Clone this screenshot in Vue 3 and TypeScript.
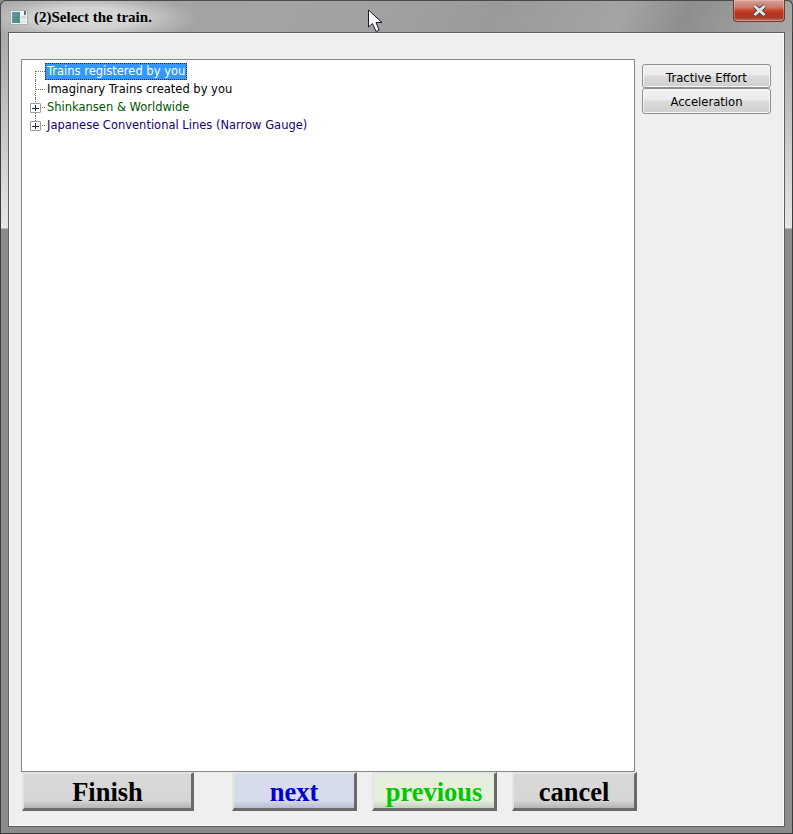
<script setup lang="ts">
interface Node { label: string; color: string; expandable: boolean; selected?: boolean }
const nodes: Node[] = [
  { label: 'Trains registered by you', color: '#fff', expandable: false, selected: true },
  { label: 'Imaginary Trains created by you', color: '#000', expandable: false },
  { label: 'Shinkansen & Worldwide', color: '#005500', expandable: true },
  { label: 'Japanese Conventional Lines (Narrow Gauge)', color: '#1c006e', expandable: true },
]
const actions = [
  { label: 'Finish', cls: 'finish' },
  { label: 'next', cls: 'next' },
  { label: 'previous', cls: 'previous' },
  { label: 'cancel', cls: 'cancel' },
]
</script>

<template>
  <div class="window">
    <div class="titlebar">
      <svg class="app-icon" width="18" height="15" viewBox="0 0 18 15">
        <defs>
          <linearGradient id="pane" x1="0" y1="0" x2="1" y2="1">
            <stop offset="0" stop-color="#6f93a8" />
            <stop offset="1" stop-color="#3f8f78" />
          </linearGradient>
        </defs>
        <rect x="0.5" y="0.5" width="17" height="14" fill="#f2f5f4" stroke="#a7b0b0" />
        <rect x="2" y="2" width="8" height="11" fill="url(#pane)" />
        <rect x="11" y="6" width="5" height="3" fill="#d3d9d9" />
        <rect x="11" y="10" width="5" height="3" fill="#e2e6e6" />
        <rect x="14" y="1" width="2" height="4" fill="#4d7078" />
      </svg>
      <span class="title">(2)Select the train.</span>
      <div class="close">
        <svg width="15" height="13" viewBox="0 0 15 13">
          <path d="M2.5 2 L12.5 11 M12.5 2 L2.5 11" stroke="#4a3a3f" stroke-width="4.4" />
          <path d="M2.5 2 L12.5 11 M12.5 2 L2.5 11" stroke="#dfe2e6" stroke-width="3" />
        </svg>
      </div>
      <svg class="cursor" width="18" height="24" viewBox="0 0 18 24">
        <path d="M1.5 1 L1.5 18 L5.5 14.5 L9 22.5 L12 21 L9 13.5 L15 13.5 Z" fill="#fff" stroke="#1a1a2a" stroke-width="1" />
      </svg>
    </div>
    <div class="client">
      <div class="main">
        <div class="tree">
          <div v-for="(n, i) in nodes" :key="n.label" class="row">
            <span class="gutter">
              <span class="vline" :class="{ first: i === 0, last: i === nodes.length - 1 }"></span>
              <span class="hline"></span>
              <span v-if="n.expandable" class="plus"></span>
            </span>
            <span class="label" :class="{ selected: n.selected }" :style="{ color: n.color }">{{ n.label }}</span>
          </div>
        </div>
        <div class="side">
          <button class="side-btn">Tractive Effort</button>
          <button class="side-btn">Acceleration</button>
        </div>
      </div>
      <div class="actions">
        <button v-for="a in actions" :key="a.label" class="action" :class="a.cls">{{ a.label }}</button>
      </div>
    </div>
  </div>
</template>

<style>
html, body { margin: 0; padding: 0; background: #8f8f8f; }
</style>

<style scoped>
.window {
  width: 793px;
  height: 834px;
  box-sizing: border-box;
  padding: 0 8px 7px 8px;
  border-radius: 6px 6px 0 0;
  box-shadow: inset 0 0 0 1px #3c3c3c;
  background: linear-gradient(to bottom, #a8a8a8 0, #a8a8a8 32px, #e6e6e6 228px, #8c8c8c 229px, #8c8c8c 100%);
  font-family: "DejaVu Sans", sans-serif;
  display: flex;
  flex-direction: column;
}
.titlebar {
  height: 32px;
  margin: 0 -8px;
  padding: 2px 0 0 10px;
  flex: none;
  display: flex;
  align-items: center;
  gap: 6px;
  position: relative;
  box-sizing: border-box;
  border: 1px solid #4a4a4a;
  border-bottom: none;
  border-radius: 6px 6px 0 0;
  background:
    radial-gradient(ellipse 112px 24px at 85px 17px, #d8d8d8 0, #d2d2d2 45%, rgba(200,200,200,0.5) 75%, rgba(170,170,170,0) 100%),
    linear-gradient(112deg, #a6a6a6 0, #a2a2a2 45%, #9a9a9a 62%, #a4a4a4 78%, #8e8e8e 86%, #a8a8a8 100%);
}
.app-icon { flex: none; margin-left: -1px; }
.title {
  font-family: "Liberation Serif", serif;
  font-weight: bold;
  font-size: 15px;
  color: #000;
}
.close {
  position: absolute;
  right: 7px;
  top: -1px;
  width: 52px;
  height: 22px;
  box-sizing: border-box;
  border: 1px solid #6b3a34;
  border-top: none;
  border-radius: 0 0 4px 4px;
  box-shadow: inset 0 0 0 1px rgba(255, 220, 210, 0.35);
  background: linear-gradient(to bottom, #d6a399 0, #c9796b 35%, #c8452a 50%, #b8321e 62%, #a83c2c 85%, #c47a6c 100%);
  display: flex;
  align-items: center;
  justify-content: center;
}
.cursor { position: absolute; left: 366px; top: 8px; }
.client {
  flex: 1;
  min-height: 0;
  box-sizing: border-box;
  background: #efefef;
  border: 1px solid #5e5e5e;
  box-shadow: inset 0 0 0 1px #fafafa;
  padding: 26px 0 15px 12px;
  display: flex;
  flex-direction: column;
}
.main { flex: 1; min-height: 0; display: flex; align-items: flex-start; }
.tree {
  width: 614px;
  height: 713px;
  box-sizing: border-box;
  background: #fff;
  border: 1px solid #828790;
  padding-top: 2px;
  font-size: 11.5px;
  flex: none;
}
.row { height: 18px; display: flex; align-items: center; }
.gutter { position: relative; width: 23px; height: 18px; flex: none; }
.vline {
  position: absolute;
  left: 13px;
  top: 0;
  bottom: 0;
  border-left: 1px dotted #777;
}
.vline.first { top: 9px; }
.vline.last { bottom: 9px; }
.hline {
  position: absolute;
  left: 13px;
  top: 9px;
  width: 10px;
  border-top: 1px dotted #777;
}
.plus {
  position: absolute;
  left: 8px;
  top: 5px;
  width: 11px;
  height: 10px;
  box-sizing: border-box;
  border: 1px solid #9a9a9a;
  border-radius: 1px;
  background:
    linear-gradient(#1c2a5a, #1c2a5a) center / 7px 1px no-repeat,
    linear-gradient(#1c2a5a, #1c2a5a) center / 1px 6px no-repeat,
    #fff;
}
.label {
  height: 17px;
  line-height: 17px;
  padding: 0 2px;
  white-space: nowrap;
  box-sizing: border-box;
}
.label.selected {
  background: #3399ff;
  outline: 1px dotted #4a2a00;
  outline-offset: -1px;
}
.side {
  width: 129px;
  margin: 5px 0 0 7px;
  display: flex;
  flex-direction: column;
  flex: none;
}
.side-btn {
  height: 24px;
  box-sizing: border-box;
  border: 1px solid #8e8e8e;
  border-radius: 3px;
  padding: 3px 0 0;
  font-family: "DejaVu Sans", sans-serif;
  font-size: 11.6px;
  color: #000;
  background: linear-gradient(to bottom, #f2f2f2 0, #ebebeb 45%, #dcdcdc 50%, #cfcfcf 100%);
  box-shadow: inset 0 0 0 1px #f7f7f7;
}
.side-btn + .side-btn { height: 26px; padding: 2px 0 0; }
.actions {
  flex: none;
  height: 39px;
  margin-left: 1px;
  display: flex;
}
.action {
  width: 125px;
  height: 39px;
  box-sizing: border-box;
  padding: 2px 0 0;
  margin-left: 15px;
  border-style: solid;
  border-width: 2px 3px 3px 2px;
  border-color: #e4e4e4 #6a6a6a #6a6a6a #e4e4e4;
  font-family: "Liberation Serif", serif;
  font-weight: bold;
  font-size: 26.5px;
  cursor: default;
}
.finish { width: 172px; margin-left: 0; margin-right: 23px; color: #000; background: linear-gradient(to bottom, #d8d8d8 0, #d6d6d6 78%, #b4b4b4 100%); }
.next { color: #0000cc; background: linear-gradient(to bottom, #d6dcec 0, #d6dcec 78%, #b6bccc 100%); }
.previous { color: #00c800; background: linear-gradient(to bottom, #e6efdc 0, #e6efdc 78%, #c6cebc 100%); }
.cancel { color: #000; background: linear-gradient(to bottom, #d8d8d8 0, #d6d6d6 78%, #b4b4b4 100%); }
</style>
